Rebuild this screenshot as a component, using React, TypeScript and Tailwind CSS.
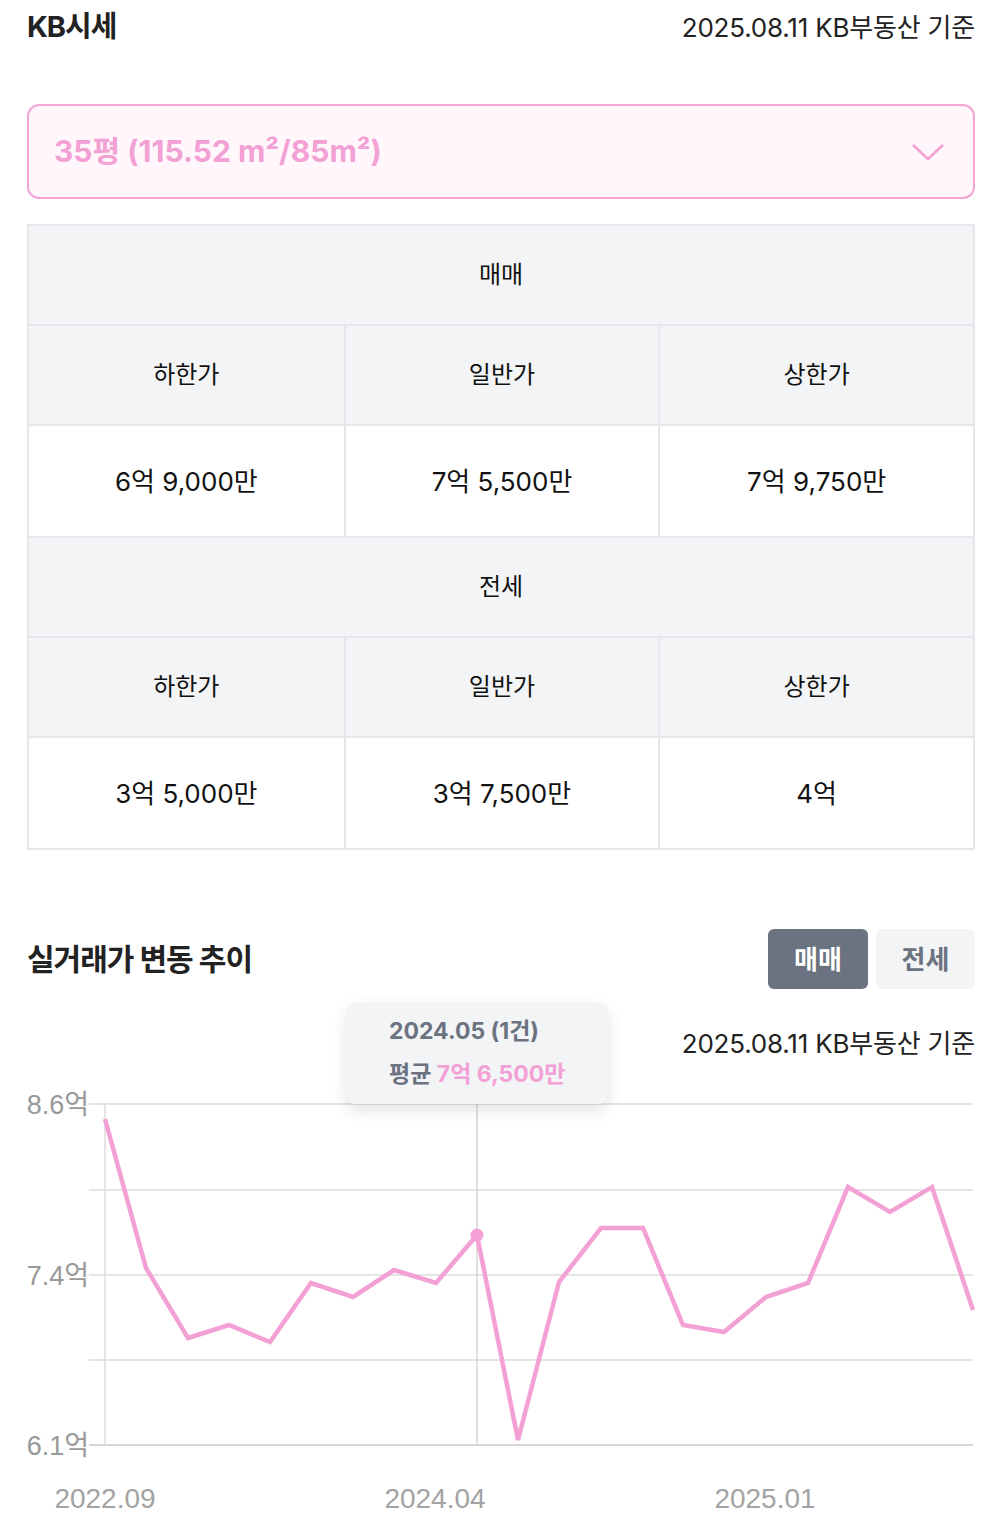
import React from "react";

const PINK = "#f3a0d5";

const POINTS: [number, number][] = [
  [105, 1119], [146, 1268], [188, 1338], [229, 1325], [270, 1342], [311, 1283],
  [353, 1297], [394, 1270], [436, 1283], [477, 1235], [518, 1440], [559, 1282],
  [601, 1228], [643, 1228], [683, 1325], [724, 1332], [766, 1297], [808, 1283],
  [848, 1187], [890, 1212], [932, 1187], [973, 1310],
];

// svg origin sits at page (27, 1060)
const OX = 27;
const OY = 1060;

type Row = { title: string; values: string[] };

const ROWS: Row[] = [
  { title: "매매", values: ["6억 9,000만", "7억 5,500만", "7억 9,750만"] },
  { title: "전세", values: ["3억 5,000만", "3억 7,500만", "4억"] },
];

const LABELS = ["하한가", "일반가", "상한가"];

function PriceTable() {
  return (
    <div className="mt-[25px] border-2 border-[#e5e7eb]">
      {ROWS.map((row, i) => (
        <div key={row.title} className={i > 0 ? "border-t-2 border-[#e5e7eb]" : ""}>
          <div className="h-[98px] bg-[#f3f4f6] flex items-center justify-center text-[24px] text-[#111]">
            {row.title}
          </div>
          <div className="grid grid-cols-3 bg-[#f3f4f6] border-t-2 border-[#e5e7eb]">
            {LABELS.map((l, j) => (
              <div
                key={l}
                className={`h-[98px] flex items-center justify-center text-[24px] text-[#111] ${j > 0 ? "border-l-2 border-[#e5e7eb]" : ""}`}
              >
                {l}
              </div>
            ))}
          </div>
          <div className="grid grid-cols-3 bg-white border-t-2 border-[#e5e7eb]">
            {row.values.map((v, j) => (
              <div
                key={j}
                className={`h-[110px] flex items-center justify-center text-[26px] text-[#111] ${j > 0 ? "border-l-2 border-[#e5e7eb]" : ""}`}
              >
                {v}
              </div>
            ))}
          </div>
        </div>
      ))}
    </div>
  );
}

function Chart() {
  const grid = [1104, 1190, 1275, 1360, 1445];
  const pts = POINTS.map(([x, y]) => `${x - OX},${y - OY}`).join(" ");
  return (
    <svg width="948" height="460" viewBox="0 0 948 460" className="block">
      {grid.map((y, i) => (
        <line
          key={y}
          x1={89 - OX}
          x2={973 - OX}
          y1={y - OY}
          y2={y - OY}
          stroke={i === grid.length - 1 ? "#c8c8c8" : "#dddddd"}
          strokeWidth="1.5"
        />
      ))}
      <line x1={105 - OX} x2={105 - OX} y1={1104 - OY} y2={1445 - OY} stroke="#dddddd" strokeWidth="1.5" />
      <line x1={477 - OX} x2={477 - OX} y1={1104 - OY} y2={1445 - OY} stroke="#d6d6d6" strokeWidth="1.5" />
      {[
        ["8.6억", 1104],
        ["7.4억", 1275],
        ["6.1억", 1445],
      ].map(([t, y]) => (
        <text
          key={t as string}
          x={89 - OX}
          y={(y as number) - OY + 10}
          textAnchor="end"
          fontSize="27"
          fill="#999"
          fontFamily="'Liberation Sans', 'Noto Sans CJK KR', sans-serif"
        >
          {t}
        </text>
      ))}
      {[
        ["2022.09", 105],
        ["2024.04", 435],
        ["2025.01", 765],
      ].map(([t, x]) => (
        <text
          key={t as string}
          x={(x as number) - OX}
          y={1508 - OY}
          textAnchor="middle"
          fontSize="28"
          fill="#a3a3a3"
          fontFamily="'Liberation Sans', sans-serif"
        >
          {t}
        </text>
      ))}
      <polyline points={pts} fill="none" stroke={PINK} strokeWidth="4.5" strokeLinejoin="miter" />
      <circle cx={477 - OX} cy={1235 - OY} r="6.5" fill={PINK} />
    </svg>
  );
}

export default function App() {
  return (
    <div
      className="w-[1000px] h-[1520px] bg-white pl-[27px] pr-[25px] pt-[8px] overflow-hidden"
      style={{ fontFamily: "Inter, 'Noto Sans CJK KR', sans-serif" }}
    >
      <div className="h-[38px] flex items-center justify-between">
        <h1 className="text-[29px] font-bold tracking-[-1px] text-[#222]">KB시세</h1>
        <span className="text-[26px] tracking-[-0.2px] text-[#222]">2025.08.11 KB부동산 기준</span>
      </div>

      <div className="mt-[58px] h-[95px] rounded-[12px] border-2 border-[#f3a5d6] bg-[#fff7fc] px-[25px] flex items-center justify-between">
        <span className="text-[30px] font-bold tracking-[0px] text-[#f3a0d5]">35평 (115.52 m²/85m²)</span>
        <svg width="34" height="20" viewBox="0 0 34 20" className="mr-[3px]">
          <path d="M2 3 L17 17 L32 3" fill="none" stroke={PINK} strokeWidth="2.5" />
        </svg>
      </div>

      <PriceTable />

      <div className="relative mt-[79px]">
        <div className="flex items-center justify-between">
          <h2 className="text-[30px] font-bold tracking-[-1px] text-[#222]">실거래가 변동 추이</h2>
          <div className="flex gap-[8px]">
            <button className="w-[100px] h-[60px] rounded-[6px] bg-[#6b7280] text-white text-[26px] font-bold">
              매매
            </button>
            <button className="w-[99px] h-[60px] rounded-[6px] bg-[#f3f4f6] text-[#6b7280] text-[26px] font-bold">
              전세
            </button>
          </div>
        </div>

        <div className="mt-[39px] flex justify-end">
          <span className="text-[26px] tracking-[-0.2px] text-[#222] leading-[32px]">2025.08.11 KB부동산 기준</span>
        </div>

        <Chart />

        <div className="absolute left-[320px] top-[74px] w-[260px] h-[101px] rounded-[8px] bg-[#f3f4f6] shadow-[0_6px_16px_rgba(0,0,0,0.12)] pl-[42px] pt-[10px]">
          <div className="text-[23px] font-bold text-[#6b7280] leading-[36px]">2024.05 (1건)</div>
          <div className="text-[23px] font-bold text-[#6b7280] leading-[36px] mt-[7px]">
            평균 <span className="text-[#f3a0d5]">7억 6,500만</span>
          </div>
        </div>
      </div>
    </div>
  );
}
